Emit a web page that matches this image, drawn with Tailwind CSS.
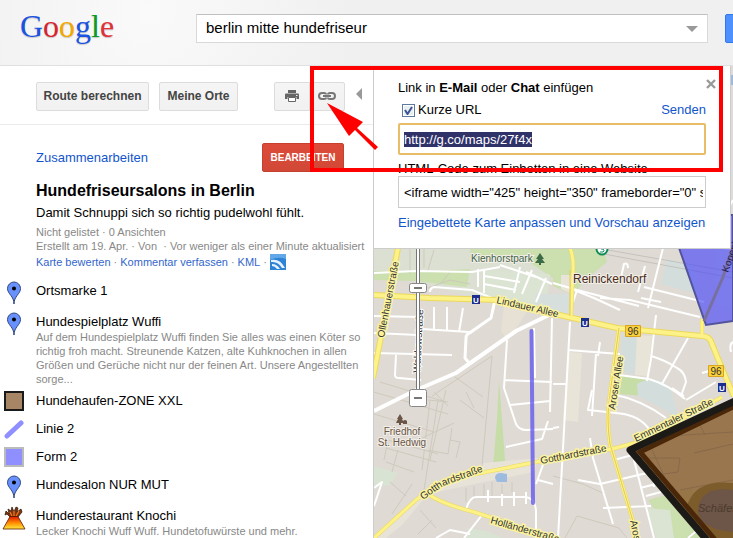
<!DOCTYPE html>
<html lang="de">
<head>
    <meta charset="utf-8"/>
    <meta content="width=device-width, initial-scale=1.0" name="viewport"/>
    <title>Google Maps - Hundefriseursalons in Berlin</title>
    <script src="https://cdn.jsdelivr.net/npm/@tailwindcss/browser@4"></script>
</head>
<body class="relative flex flex-col h-screen overflow-hidden bg-white font-['Liberation_Sans',Arial,sans-serif] text-[13px] text-black">

    <!-- Header -->
    <header class="flex items-center shrink-0 h-[66px] pb-2 pl-5 bg-[#f0f0f0] bg-radial-[circle_at_20%_20%] from-[#fafafa] to-[#f0f0f0] to-35% border-b border-[#e0e0e0] overflow-hidden">
        <a href="#" aria-label="Google" class="w-44 shrink-0 pb-[5px] font-['Liberation_Serif',serif] text-[32px] leading-8 text-shadow-xs">
            <span class="text-[#1b52e0]">G</span><span class="text-[#d8232f]">o</span><span class="text-[#f5a700]">o</span><span class="text-[#1b52e0]">g</span><span class="text-[#0c9a25]">l</span><span class="text-[#e03138]">e</span>
        </a>
        <form class="flex flex-1 items-center h-[29px] bg-white border border-[#d9d9d9] border-t-[#c0c0c0]">
            <input type="text" aria-label="Suche" value="berlin mitte hundefriseur" class="flex-1 min-w-0 pl-[9px] text-[15px] outline-none"/>
            <button type="button" aria-label="Vorschläge" class="px-[9px]">
                <svg class="block" width="12" height="6" viewBox="0 0 12 6"><path d="M0 0h12L6 6z" fill="#999"/></svg>
            </button>
        </form>
        <button type="button" aria-label="Suchen" class="shrink-0 w-12 h-[29px] ml-[17px] -mr-10 rounded-xs bg-[#4d90fe] border border-[#3079ed]"></button>
    </header>

    <main class="flex flex-1 min-h-0">
        <!-- Sidebar -->
        <aside class="w-[374px] shrink-0 border-r border-[#ccc]">
            <div class="flex items-center h-[59px] pt-[2px] pl-9 border-b border-[#ebebeb] text-xs font-bold text-[#444]">
                <button type="button" class="h-[29px] w-[113px] rounded-xs border border-[#dcdcdc] bg-linear-to-b from-[#f5f5f5] to-[#f1f1f1]">Route berechnen</button>
                <button type="button" class="h-[29px] w-[79px] ml-[10px] rounded-xs border border-[#dcdcdc] bg-linear-to-b from-[#f5f5f5] to-[#f1f1f1]">Meine Orte</button>
                <div class="flex ml-9 h-[29px] w-[71px] rounded-xs border border-[#dcdcdc] bg-linear-to-b from-[#f5f5f5] to-[#f1f1f1]">
                    <button type="button" aria-label="Drucken" class="flex flex-1 items-center justify-center border-r border-[#dcdcdc]">
                        <svg width="14" height="12" viewBox="0 0 14 12"><path d="M3 0h8v3H3z" fill="#666"/><path d="M1 3.500h12q1 0 1 1V9h-2.500V7h-9v2H0V4.500q0-1 1-1z" fill="#666"/><path d="M3.500 7.500h7v4h-7z" fill="#fff" stroke="#666"/><path d="M11 5h1.500v1H11z" fill="#f3f3f3"/></svg>
                    </button>
                    <button type="button" aria-label="Link" class="flex flex-1 items-center justify-center">
                        <svg width="18" height="8" viewBox="0 0 18 8" fill="none" stroke="#777" stroke-width="2"><path d="M8 2.500C8 1.500 7 1 6 1H4a3 3 0 0 0 0 6h2c1 0 2-.5 2-1.500M10 2.500C10 1.500 11 1 12 1h2a3 3 0 0 1 0 6h-2c-1 0-2-.5-2-1.500M5 4h8"/></svg>
                    </button>
                </div>
                <button type="button" aria-label="Einklappen" class="ml-[11px] pb-1">
                    <svg width="6" height="12" viewBox="0 0 6 12"><path d="M6 0v12L0 6z" fill="#999"/></svg>
                </button>
            </div>

            <div class="flex items-center justify-between pt-[18px] pl-9 pr-[29px]">
                <a href="#" class="text-[#15c]">Zusammenarbeiten</a>
                <button type="button" class="h-[29px] w-[82px] rounded-xs border border-[#c6402f] bg-linear-to-b from-[#dd4b39] to-[#d14836] text-[10px] font-bold text-white">BEARBEITEN</button>
            </div>

            <div class="pl-9 whitespace-nowrap">
                <h1 class="mt-[9px] text-base leading-5 font-bold">Hundefriseursalons in Berlin</h1>
                <p class="mt-1 leading-4">Damit Schnuppi sich so richtig pudelwohl fühlt.</p>
                <p class="mt-1 text-[11px] leading-[14px] text-[#888]">Nicht gelistet · 0 Ansichten<br/>Erstellt am 19. Apr. · Von &nbsp;· Vor weniger als einer Minute aktualisiert</p>
                <p class="flex items-center gap-[3px] mt-px text-[11px] leading-4 text-[#888]">
                    <a href="#" class="text-[#36c]">Karte bewerten</a>·
                    <a href="#" class="text-[#36c]">Kommentar verfassen</a>·
                    <a href="#" class="text-[#36c]">KML</a>·
                    <a href="#" aria-label="Google Earth">
                        <svg width="16" height="16" viewBox="0 0 16 16"><path d="M0 0h16v16H0z" fill="#2f83d6"/><path d="M0 0h16v5Q8 2 0 6z" fill="#62a8e8"/><path d="M1 6q9-2 14 8h-3Q8 7 1 8zM2 10q5 0 8 5H7q-2-3-5-3z" fill="#e6f2fd"/></svg>
                    </a>
                </p>
            </div>

            <svg class="hidden">
                <symbol id="pin" viewBox="0 0 16 24"><path d="M8 23C8 15 1.500 13 1.500 7.500a6.500 6.500 0 0 1 13 0C14.500 13 8 15 8 23z" fill="#6991fd" stroke="#30477d"/><circle cx="8" cy="7.500" r="2" fill="#000"/></symbol>
            </svg>

            <ul class="mt-[11px] leading-4">
                <li class="flex h-[31px]">
                    <div class="flex w-9 pl-[6px]"><svg width="16" height="24"><use href="#pin"/></svg></div>
                    <a href="#" class="pt-[2px]">Ortsmarke 1</a>
                </li>
                <li class="flex h-[79px]">
                    <div class="flex w-9 pl-[6px]"><svg width="16" height="24"><use href="#pin"/></svg></div>
                    <div class="pt-[2px] whitespace-nowrap">
                        <a href="#">Hundespielplatz Wuffi</a>
                        <p class="text-[11px] leading-[14px] text-[#888]">Auf dem Hundespielplatz Wuffi finden Sie alles was einen Köter so<br/>richtig froh macht. Streunende Katzen, alte Kuhknochen in allen<br/>Größen und Gerüche nicht nur der feinen Art. Unsere Angestellten<br/>sorge...</p>
                    </div>
                </li>
                <li class="flex h-7">
                    <div class="flex w-9 pl-1"><svg width="20" height="20"><path d="M1 1h18v18H1z" fill="#a68664" stroke="#1a1a1a" stroke-width="2"/></svg></div>
                    <a href="#" class="pt-[2px]">Hundehaufen-ZONE XXL</a>
                </li>
                <li class="flex h-7">
                    <div class="flex w-9 pl-1"><svg width="20" height="20"><path d="M3 17L17 4" stroke="#8f8fff" stroke-width="5" stroke-linecap="round"/></svg></div>
                    <a href="#" class="pt-[2px]">Linie 2</a>
                </li>
                <li class="flex h-7">
                    <div class="flex w-9 pl-1"><svg width="20" height="20"><path d="M1 1h18v18H1z" fill="#8f8fff" stroke="#bbb" stroke-width="2"/></svg></div>
                    <a href="#" class="pt-[2px]">Form 2</a>
                </li>
                <li class="flex h-[31px]">
                    <div class="flex w-9 pl-[6px]"><svg width="16" height="24"><use href="#pin"/></svg></div>
                    <a href="#" class="pt-[2px]">Hundesalon NUR MUT</a>
                </li>
                <li class="flex">
                    <div class="flex w-9 pl-[2px]">
                        <svg width="24" height="24" viewBox="0 0 24 24">
                            <defs><linearGradient id="lava" x2="0" y2="1"><stop offset="0" stop-color="#e01800"/><stop offset=".5" stop-color="#ff8a00"/><stop offset="1" stop-color="#ffe83a"/></linearGradient></defs>
                            <path d="M8 11L5 8 3 9l1-4 3 3-1-5 3 2 1-4 2 5 2-5 2 1-1 4 4-3 1 3-4 5z" fill="#7a3412" stroke="#3a2010" stroke-width=".8"/>
                            <path d="M10 10L8 6M12 10V5M14 10l3-5" stroke="#ff7a10" stroke-width="1.200"/>
                            <path d="M8 10.500h8L23 23H1z" fill="url(#lava)" stroke="#5a1a00" stroke-width=".8"/>
                        </svg>
                    </div>
                    <div class="pt-[2px] whitespace-nowrap">
                        <a href="#">Hunderestaurant Knochi</a>
                        <p class="text-[11px] leading-[14px] text-[#888]">Lecker Knochi Wuff Wuff. Hundetofuwürste und mehr.</p>
                    </div>
                </li>
            </ul>
        </aside>

        <!-- Map -->
        <section class="relative flex-1 min-w-0 bg-[#dfdbd4] overflow-hidden">
            <svg class="block w-full h-full" viewBox="374 66 359 472" preserveAspectRatio="xMinYMin slice" fill="none" font-family="Liberation Sans, Arial, sans-serif">
                <!-- areas -->
                <path d="M374 245h179v30l-30 20-50 2-60-16-39-6z" fill="#dbe0d3"/>
                <path d="M374 271l40 1 56-3-3 18-52-6-41-1zM470 248h83v30l-24-16-58-4z" fill="#cbdfaf"/>
                <path d="M484 270l66 4-4 32-60-7z" fill="#dbe3d2"/>
                <path d="M553 248h50l4 14-22 18 -12 15-20-9z" fill="#cbdfaf"/>
                <path d="M536 294l40 0-6 22-36-8z" fill="#d6dfdc"/>
                <path d="M561 275h13v20l-13-6z" fill="#e9e4d8"/>
                <path d="M667 259l26 6 4 29-36-10zM622 334l15 1-2 40-14-4z" fill="#d3dedc"/>
                <path d="M504 305l24 4-7 12-13 20-7-10z" fill="#e6e1d4"/>
                <path d="M637 335l15 1-4 40-13-1zM568 352l14 1-4 69-15-2z" fill="#e9e4d8"/>
                <path d="M619 375l44 8-4 14-41-3z" fill="#c6dda8"/>
                <path d="M637 384q20-10 34 4l7 30-16-10-24-12z" fill="#d3dedc"/>
                <path d="M499 380l6 80q0 4-12 7l4-48z" fill="#c6dda8"/>
                <path d="M374 466l24 7-8 12-16 2z" fill="#d9e3d3"/>
                <path d="M374 538l60-54 50-21 54-5-4 14-60 12-46 10-26 31-16 13z" fill="#e8e3d8"/>
                <path d="M495 478q0-5 6-5l6 1v8h-10z" fill="#9dbbdf"/>
                <path d="M468 528l22 4 12 6h-36z" fill="#d9e3d3"/>
                <path d="M648 500l44-12 20 50h-38z" fill="#cbdfaf"/>
                <path d="M646 508l24 2 4 28h-18z" fill="#dbe3d2"/>
                <path d="M716 66h17v240h-17z" fill="#dedcda"/>
                <path d="M731 75h2v10h-2z" fill="#9dbbdf"/>

                <!-- footpaths and plots -->
                <g stroke="#cfc9bd">
                    <path d="M374 392l74 22M380 382l66 20M430 400l-8 70M438 400l-14 90M446 390l-16 70M374 414l60 18M388 440l50 14M386 448l50 14M386 462l28 10M388 440l-4 20M422 438l32-15M398 450l-6 22M452 428l-4 26-20-4M450 440l10 2-4 16M434 392l14 14M466 392l8 16M492 356l-10 110M492 356l-60 40M455 377l28 20M460 400l24 18M428 400l20 2"/>
                    <path d="M390 482l16 14M412 484l-20 30M420 510l16 18M432 520l-14 14M474 486v14M484 484v14M492 482v14M502 484v10M512 482v10M466 488v14"/>
                    <path d="M553 476l30 8 22 10M565 538l12-22 42 12 8 10"/>
                    <path d="M440 284l12-14M428 288l22-8 20 4M410 248v26M424 248v20M434 250l-6 20"/>
                    <path d="M608 250l125 22M604 254l129 24" stroke="#c5c2bd"/>
                </g>

                <!-- minor streets -->
                <g stroke="#fff" stroke-width="2" stroke-linejoin="round">
                    <path d="M374 273l42-2 56 1 28-5M374 316l45 1M374 333l44 2M374 353l78 2M396 355l-1 20q0 3 4 3l22 2M422 329l47 3M434 307v22M447 307v23M463 308l-4 24M430 292q0-4 4-5l38 3 20 8"/>
                    <path d="M484 270v23M478 269v18M484 276l36 6M484 284l32 6M520 267l-6 26M532 270l-10 24M526 272l26 12M546 278l-10 24M500 265l36 12"/>
                    <path d="M495 300l-4 18-20 14q-5 2-5 6l-1 20 5 6" stroke-width="3"/>
                    <path d="M374 411l40-20 42-18 60-42 37-18" stroke-width="4"/>
                    <path d="M507 340l-3 48 12 36q3 6 10 6l27-1M504 380l48 2M534 328l1 50M552 318l-2 94M510 405l40-4M506 447l36-8 6-18M536 484l8-22 9-4M538 480l15 4M482 515l-18 23M536 538v-27q-1-14-12-14h-48q-6 0-10 12M488 490v12M502 494v12M514 492v14M526 492v12M374 488l8-6-8 24"/>
                    <path d="M436 538l14-8 20 4"/>
                    <path d="M553 283l24 7 62 16M577 290l-4 12M620 310l-26-12-20-8M600 298l30 2 70 17M648 308l15-60M638 292l7-26M620 282l4-18q4-2 4 4M644 287l60 15M661 302l-20-4M570 322l-12 216M568 350l52 4M600 342l-2 14M596 354l-4 62M553 384l14 0M656 315l-5 44-4 22"/>
                    <path d="M619 375l30 4q20 6 36 20M651 356q14 4 26 12 8 4 9 14l-5 14M688 338l-26 46M702 373l14-4M733 342q-4 2-2 10"/>
                    <path d="M592 390l-4 20q20 2 36 4 20 4 28 20M553 428l6-1M612 394q30 6 54 24M684 396l-12-8M686 400l30-18M590 438l3 20 20 66M578 480l22 4 60-14M603 508l48-2M614 460l22-6M634 460l20 78M640 488l20-5M654 475v12M646 496l15-4M688 538l12-10"/>
                    <path d="M733 250l-72-14M553 248l44-1M733 200l-17 30"/>
                </g>

                <!-- main roads -->
                <g stroke="#ecd95a" stroke-width="6" stroke-linejoin="round">
                    <path d="M398 248l-25 130M374 295l56 3 70 2 55 14 62 14 85 8q8 0 10 8l14 34 8 18"/>
                    <path d="M570 248q4 10 3 24l-2 44M619 328l-9 66q-4 24 0 50l28 94M374 538l42-38q28-22 60-26l60-12 76-13 30-8 80-44M428 494q14 10 46 18l80 26M702 337v-18" stroke-width="4"/>
                </g>
                <g stroke="#fdf288" stroke-width="4" stroke-linejoin="round">
                    <path d="M398 248l-25 130M374 295l56 3 70 2 55 14 62 14 85 8q8 0 10 8l14 34 8 18"/>
                    <path d="M570 248q4 10 3 24l-2 44M619 328l-9 66q-4 24 0 50l28 94M374 538l42-38q28-22 60-26l60-12 76-13 30-8 80-44M428 494q14 10 46 18l80 26M702 337v-18" stroke-width="3"/>
                </g>
                <path d="M619 328l-9 66q-4 24 0 50l28 94M570 270v46" stroke="#dfcb58"/>

                <!-- road signs -->
                <g font-size="10" text-anchor="middle">
                    <path d="M472 295h8v9h-8zM581 318h8v9h-8zM718 383h8v9h-8z" fill="#1c2f91"/>
                    <g fill="#fff" font-weight="bold" font-size="8"><text x="476" y="303">U</text><text x="585" y="326">U</text><text x="722" y="391">U</text></g>
                    <path d="M625.500 325.500h15v11h-15zM708.500 365.500h15v11h-15z" fill="#fbd13c" stroke="#d9a520"/>
                    <g fill="#333"><text x="633" y="335">96</text><text x="716" y="375">96</text></g>
                </g>
                <circle cx="602" cy="249" r="5.500" fill="#fff" stroke="#0d8a56" stroke-width="2"/>
                <path d="M604 247h-3q-2 1 0 2h2q2 2 0 3h-3" stroke="#0d8a56"/>

                <!-- street names -->
                <g font-size="10" fill="#333" stroke="#fbf3a0" stroke-width="3" paint-order="stroke">
                    <text transform="translate(384 338) rotate(-79)">Ollenhauerstraße</text>
                    <text transform="translate(496 303) rotate(13)">Lindauer Allee</text>
                    <text transform="translate(423 500) rotate(-35)">Gotth</text>
                    <text transform="translate(443 486) rotate(-20)">ardstraße</text>
                    <text transform="translate(541 464) rotate(-11)">Gotthardstraße</text>
                    <text transform="translate(490 523) rotate(16)">Holländerstraße</text>
                    <text transform="translate(615 410) rotate(-81)">Aroser Allee</text>
                    <text transform="translate(630 521) rotate(78)">Aroser</text>
                    <text transform="translate(636 442) rotate(-26)">Emmentaler Straße</text>
                </g>
                <text transform="translate(420 373) rotate(-87)" font-size="10" fill="#333" stroke="#fff" stroke-width="2" paint-order="stroke">Waldowstraße</text>

                <!-- places -->
                <g stroke="#f2efe9" stroke-width="2" paint-order="stroke">
                    <text x="471" y="262" font-size="10" fill="#3f6244">Kienhorstpark</text>
                    <text x="573" y="283" font-size="12" fill="#4a2a1a">Reinickendorf</text>
                    <g font-size="10" fill="#6b5546" text-anchor="middle"><text x="402" y="435">Friedhof</text><text x="402" y="446">St. Hedwig</text></g>
                </g>
                <path d="M540 253l4 6h-2l3 4h-4v2h-2v-2h-4l3-4h-2z" fill="#3c6b45"/>
                <path d="M400 414l3 5h-1l2 4h-3v2h-2v-2h-3l2-4h-1zM403 424v-3q2-2 4 0v3z" fill="#6b5546"/>

                <!-- user shapes -->
                <path d="M531.500 331l1.500 172" stroke="#5a50ee" stroke-opacity=".75" stroke-width="4" stroke-linecap="round"/>
                <path d="M678 245l28 80 27-4v-106h-17v30z" fill="#4040f8" fill-opacity=".62" stroke="#53539c" stroke-width="2"/>
                <path d="M733 248l-10 29-19 44" stroke="#77709f" stroke-width="3"/>
                <text transform="translate(728 273) rotate(-70)" font-size="10" fill="#282050">Kopenhagener</text>
                <path d="M733 401l-103 49 76 88h27z" fill="#8a5f30" fill-opacity=".82"/>
                <path d="M640 458h40l-2 14-30 4M652 450l14 30M700 425l5 10M670 436l63-4M694 453l39-9M680 490l53-10" stroke="#87694b"/>
                <path d="M733 483q-36-4-45 20t24 35h21z" fill="#7d5c2c"/>
                <path d="M733 490q-28-4-34 14t20 26l14 2z" fill="#6d5547"/>
                <text x="698" y="512" font-size="11" font-style="italic" fill="#4b3b2d">Schäfersee</text>
                <path d="M735 406l-95 46 77 90" stroke="#4a2708" stroke-width="5"/>
                <path d="M735 401l-105 49 82 96" stroke="#1b1a16" stroke-width="7" stroke-linejoin="round"/>

                <!-- zoom slider -->
                <path d="M416.500 240h3v152h-3z" fill="#fff" stroke="#777"/>
                <rect x="409.500" y="283.500" width="17" height="9" rx="2" fill="#fff" stroke="#888"/>
                <path d="M414 288h8" stroke="#777" stroke-width="2"/>
                <rect x="409.500" y="389.500" width="17" height="17" rx="2" fill="#fff" stroke="#888"/>
                <path d="M414 398h8" stroke="#777" stroke-width="2"/>
            </svg>

            <!-- Link dialog over the map -->
            <div class="absolute top-0 left-0 right-[2px] pt-[14px] pl-6 pr-6 pb-[17px] bg-white border-b border-r border-[#ccc]">
                <button type="button" aria-label="Schließen" class="absolute top-[13px] right-[14px]">
                    <svg width="10" height="10" viewBox="0 0 10 10"><path d="M1 1l8 8M9 1L1 9" stroke="#999" stroke-width="2.400"/></svg>
                </button>
                <p class="leading-4">Link in <b>E-Mail</b> oder <b>Chat</b> einfügen</p>
                <div class="flex justify-between mt-[6px] pl-1 leading-4">
                    <label class="flex items-center gap-[3px]">
                        <input type="checkbox" checked class="peer appearance-none size-[13px] border border-[#5d7aa0] bg-[#e9eef3] shadow-[inset_0_0_0_1px_#fff]"/>
                        <svg class="absolute ml-[2px] hidden peer-checked:block" width="9" height="9" viewBox="0 0 9 9"><path d="M1 4l2.500 4L8 1" fill="none" stroke="#3b5494" stroke-width="2"/></svg>
                        Kurze URL
                    </label>
                    <a href="#" class="text-[#15c]">Senden</a>
                </div>
                <input id="short-url" type="text" aria-label="Kurze URL" value="http://g.co/maps/27f4x" class="block w-full h-8 mt-[5px] px-1 border-2 border-[#e9bc66] rounded-xs outline-none selection:bg-[#2f3169] selection:text-white"/>
                <label for="embed" class="block mt-[6px] leading-[15px]">HTML-Code zum Einbetten in eine Website</label>
                <input id="embed" type="text" value='&lt;iframe width="425" height="350" frameborder="0" scrolling="no"&gt;' class="block w-full h-8 pl-[5px] pr-[2px] border border-[#ccc] outline-none"/>
                <a href="#" class="block mt-[7px] leading-4 text-[#15c] whitespace-nowrap">Eingebettete Karte anpassen und Vorschau anzeigen</a>
            </div>
        </section>
    </main>

    <!-- Red marker over the link dialog -->
    <div class="absolute top-[66px] left-[310px] right-[10px] h-[106px] border-4 border-[#f00] pointer-events-none"></div>
    <svg class="absolute top-[100px] left-[325px] pointer-events-none" width="56" height="52" viewBox="325 100 56 52"><path d="M327 103l36 19-6 6 21 19-3 3-20-20-6 6z" fill="#f00"/></svg>

    <script>
        const shortUrl = document.getElementById('short-url');
        shortUrl.focus();
        shortUrl.select();
    </script>
</body>
</html>
